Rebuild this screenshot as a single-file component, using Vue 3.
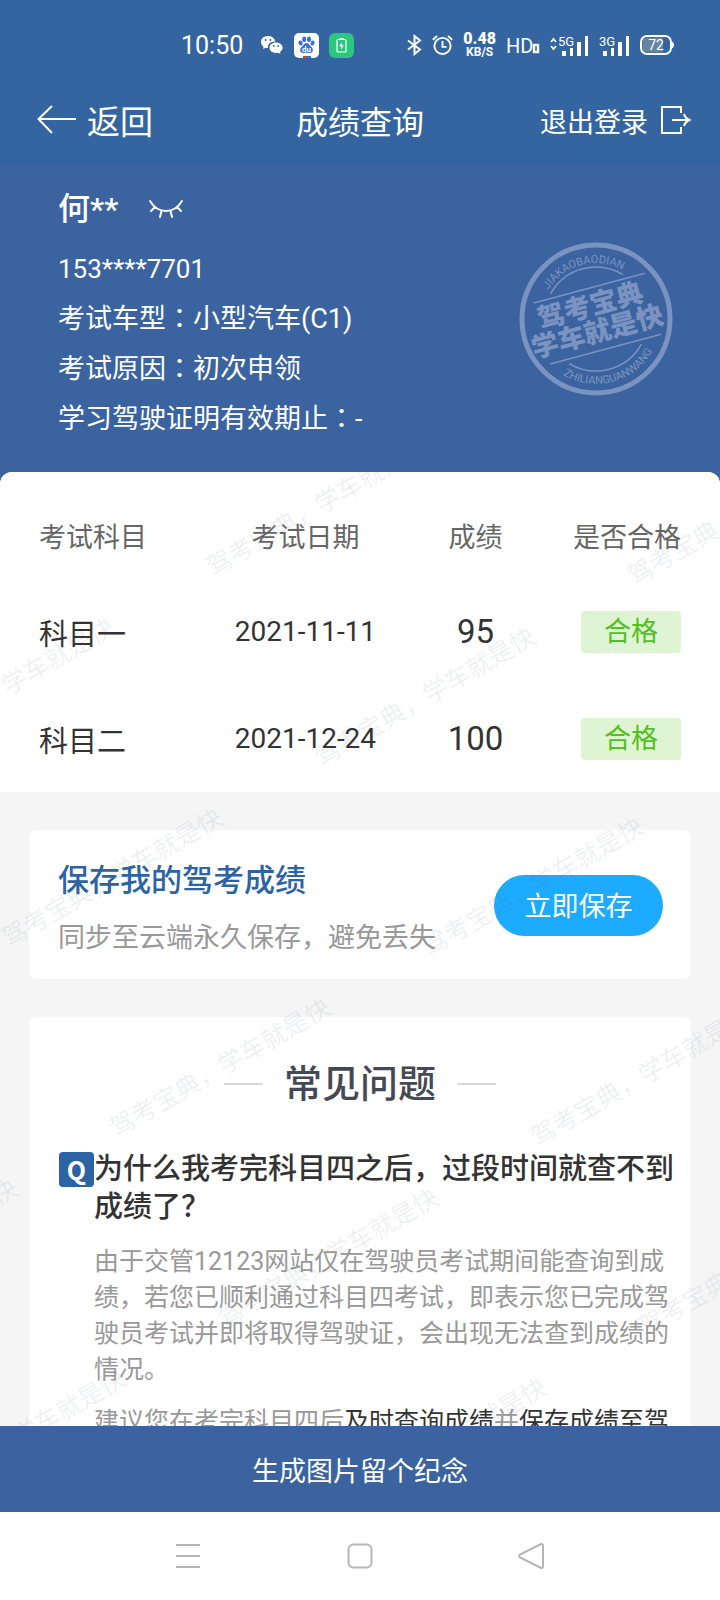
<script setup>
import { ref } from 'vue'

const candidate = {
  name: '何**',
  idNumber: '153****7701'
}

const details = [
  { label: '考试车型', value: '小型汽车(C1)' },
  { label: '考试原因', value: '初次申领' },
  { label: '学习驾驶证明有效期止', value: '-' }
]

const scores = ref([
  { subject: '科目一', date: '2021-11-11', score: 95, result: '合格' },
  { subject: '科目二', date: '2021-12-24', score: 100, result: '合格' }
])

// Watermark lattice, first glyph of each repeat
const marks = []
for (let row = 0; row < 6; row++) {
  for (let col = -2; col < 2; col++) {
    const x = 219 + row * 108 + col * 421
    const y = 91 + row * 190 + col * 9
    if (x > -210 && x < 720) marks.push({ x, y })
  }
}
</script>

<template>
  <div class="screen">
    <header class="top">
      <div class="status">
        <div class="status-left">
          <span class="clock">10:50</span>
          <svg class="wechat" width="24" height="20" viewBox="0 0 24 20">
            <path d="M8 1C3.600 1 1 3.800 1 7c0 2 1 3.600 2.500 4.700L3 14l2.600-1.300c.8.2 1.600.3 2.400.3C7.500 9 11 6.200 15.300 6.400 14.500 3 11.600 1 8 1z" fill="#fff" />
            <path d="M16 7.500c-3.800 0-6.500 2.400-6.500 5.300 0 3 2.900 5.200 6.500 5.200.8 0 1.500-.1 2.200-.3l2.300 1.200-.5-2c1.700-1.100 2.600-2.400 2.600-4.100 0-2.900-2.900-5.300-6.600-5.300z" fill="#fff" />
            <g fill="#3465a0">
              <circle cx="5.600" cy="5" r="1" /><circle cx="10.400" cy="5" r="1" />
              <circle cx="13.800" cy="11" r="0.900" /><circle cx="18.200" cy="11" r="0.900" />
            </g>
          </svg>
          <svg class="app-icon" width="25" height="25" viewBox="0 0 25 25">
            <rect width="25" height="25" rx="5" fill="#fff" />
            <g fill="#3b6fd6">
              <ellipse cx="6.500" cy="10" rx="2" ry="2.600" transform="rotate(-15 6.500 10)" />
              <ellipse cx="10.200" cy="6.200" rx="2" ry="2.800" />
              <ellipse cx="15" cy="6.200" rx="2" ry="2.800" />
              <ellipse cx="18.600" cy="10" rx="2" ry="2.600" transform="rotate(15 18.600 10)" />
              <path d="M12.500 10c-2 0-2.800 1.900-4.200 3.300C6.700 14.800 5.800 16 6.200 17.800c.4 1.900 2 2.400 3.600 2.200 1.800-.3 3.600-.3 5.400 0 1.600.2 3.200-.3 3.600-2.200.4-1.800-.5-3-2.100-4.500C15.300 11.900 14.500 10 12.500 10z" />
            </g>
            <text x="12.500" y="19" text-anchor="middle" font-size="8" font-weight="700" fill="#fff">du</text>
            <rect x="9" y="23" width="4" height="2" fill="#d9363e" />
            <rect x="13" y="23" width="4" height="2" fill="#3b6fd6" />
          </svg>
          <svg class="app-icon" width="25" height="25" viewBox="0 0 25 25">
            <rect width="25" height="25" rx="6" fill="#2bc77f" />
            <rect x="8" y="6.500" width="9" height="12.500" rx="1" fill="none" stroke="#fff" stroke-width="1.200" />
            <rect x="10.500" y="5" width="4" height="1.500" fill="#fff" />
            <path d="M13 9.500l-3 3.800h2v3l3-3.900h-2z" fill="#fff" />
          </svg>
        </div>
        <div class="status-right">
          <svg width="15" height="22" viewBox="0 0 15 22" fill="none" stroke="#fff" stroke-width="2">
            <path d="M1 6.500l12 9-5.500 4.500V2l5.500 4.500-12 9" />
          </svg>
          <svg width="21" height="22" viewBox="0 0 22 22" fill="none" stroke="#fff" stroke-width="2" stroke-linecap="round">
            <circle cx="11" cy="12" r="8.500" />
            <path d="M11 7.500V13h3.500M1.500 5l3.200-3M20.500 5l-3.200-3" />
          </svg>
          <span class="speed"><b>0.48</b><small>KB/S</small></span>
          <svg width="34" height="22" viewBox="0 0 34 22">
            <text x="0" y="19" font-size="20" fill="#fff">HD</text>
            <rect x="28" y="11" width="4" height="7" fill="none" stroke="#fff" stroke-width="2.400" />
          </svg>
          <svg width="39" height="22" viewBox="0 0 39 22" fill="#fff">
            <path d="M1 8l2.500-3L6 8M1 12l2.500 3L6 12" fill="none" stroke="#fff" stroke-width="1.800" />
            <text x="8" y="12" font-size="13">5G</text>
            <path d="M12 17h4v5h-4zM20 14h3v8h-3zM27 8h4v14h-4zM35 2h3v20h-3z" />
          </svg>
          <svg width="31" height="22" viewBox="0 0 31 22" fill="#fff">
            <text x="0" y="12" font-size="13">3G</text>
            <path d="M4 17h4v5H4zM12 14h3v8h-3zM19 8h4v14h-4zM27 2h3v20h-3z" />
          </svg>
          <svg width="34" height="20" viewBox="0 0 34 20">
            <rect x="1" y="1" width="30" height="18" rx="6" fill="#3465a0" stroke="#fff" stroke-width="2" />
            <path d="M7 2.500h16v15H7A4.500 4.500 0 0 1 2.500 13V7A4.500 4.500 0 0 1 7 2.500z" fill="#64859f" />
            <path d="M32 6.500q2 .5 2 3.500t-2 3.500z" fill="#fff" />
            <text x="16" y="15" text-anchor="middle" font-size="14" fill="#fff">72</text>
          </svg>
        </div>
      </div>
      <nav class="nav">
        <button class="nav-button back" type="button">
          <svg width="40" height="30" viewBox="0 0 40 30" fill="none" stroke="#fff" stroke-width="2">
            <path d="M15 1L1.500 14 15 28M1.500 14H39" />
          </svg>
          <span>返回</span>
        </button>
        <h1 class="nav-title">成绩查询</h1>
        <button class="nav-button logout" type="button">
          <span>退出登录</span>
          <svg width="31" height="32" viewBox="0 0 31 32" fill="none" stroke="#fff" stroke-width="2">
            <path d="M21 9V3H2v26h19v-6M12 16h17M24 10q1 4 5.500 6-4.500 2-5.500 6" />
          </svg>
        </button>
      </nav>
    </header>

    <main class="content">
      <section class="profile">
        <div class="profile-info">
          <div class="name">
            <span>{{ candidate.name }}</span>
            <button class="eye" type="button" aria-label="显示">
              <svg width="36" height="22" viewBox="0 0 36 22" fill="none" stroke="#fff" stroke-width="2" stroke-linecap="round">
                <path d="M2 3q6 10 16 10T34 3M7 9l-4 4M13.500 13L12 19M22.500 13l1.500 6M29 9l4 4" />
              </svg>
            </button>
          </div>
          <p class="id-number">{{ candidate.idNumber }}</p>
          <p v-for="item in details" :key="item.label">
            {{ item.label }}<span class="colon">：</span>{{ item.value }}
          </p>
        </div>
        <svg class="stamp" width="156" height="156" viewBox="-78 -78 156 156">
          <defs>
            <path id="arcTop" d="M-56 0A56 56 0 0 1 56 0" />
            <path id="arcBottom" d="M-65 0A65 65 0 0 0 65 0" />
          </defs>
          <circle r="74" fill="none" stroke="#7b93c0" stroke-width="5" />
          <g transform="rotate(-15)" fill="#7b93c0">
            <text font-size="11" text-anchor="middle"><textPath href="#arcTop" startOffset="50%">JIAKAOBAODIAN</textPath></text>
            <text font-size="11" text-anchor="middle"><textPath href="#arcBottom" startOffset="50%">ZHILIANGUANWANG</textPath></text>
            <g fill="none" stroke="#7b93c0" stroke-width="1.500">
              <path d="M-37.400-36.100A52 52 0 0 1 37.400-36.100M-37.400 36.100A52 52 0 0 0 37.400 36.100" />
              <path d="M-56-31.500H59M-56 31.500H59" />
            </g>
            <g class="stamp-title" text-anchor="middle">
              <text x="-2" y="-5">驾考宝典</text>
              <text x="-2" y="22">学车就是快</text>
            </g>
          </g>
        </svg>
      </section>

      <div class="sheet-area">
        <section class="sheet">
          <table class="scores">
            <thead>
              <tr>
                <th class="col-subject">考试科目</th>
                <th class="col-date">考试日期</th>
                <th class="col-score">成绩</th>
                <th class="col-result">是否合格</th>
              </tr>
            </thead>
            <tbody>
              <tr v-for="row in scores" :key="row.subject">
                <td class="col-subject">{{ row.subject }}</td>
                <td class="date">{{ row.date }}</td>
                <td class="score">{{ row.score }}</td>
                <td class="col-result"><span class="tag">{{ row.result }}</span></td>
              </tr>
            </tbody>
          </table>
        </section>

        <section class="card save">
          <div>
            <h2>保存我的驾考成绩</h2>
            <p>同步至云端永久保存，避免丢失</p>
          </div>
          <button class="save-button" type="button">立即保存</button>
        </section>

        <section class="card faq">
          <h2 class="faq-title">常见问题</h2>
          <div class="faq-item">
            <span class="q">Q</span>
            <div class="faq-text">
              <h3>为什么我考完科目四之后，过段时间就查不到成绩了？</h3>
              <p>由于交管12123网站仅在驾驶员考试期间能查询到成绩，若您已顺利通过科目四考试，即表示您已完成驾驶员考试并即将取得驾驶证，会出现无法查到成绩的情况。</p>
              <p>建议您在考完科目四后<em>及时查询成绩</em>并<em>保存成绩至驾</em></p>
            </div>
          </div>
        </section>

        <svg class="watermark" aria-hidden="true">
          <text
            v-for="(m, i) in marks"
            :key="i"
            :transform="`translate(${m.x} ${m.y}) rotate(-30)`"
            x="-12"
            y="9"
          >驾考宝典，学车就是快</text>
        </svg>
      </div>
    </main>

    <button class="generate" type="button">生成图片留个纪念</button>

    <footer class="system-nav">
      <button type="button" aria-label="菜单">
        <svg width="28" height="28" viewBox="0 0 28 28"><path d="M2 3h24M2 14h24M2 25h24" /></svg>
      </button>
      <button type="button" aria-label="主页">
        <svg width="28" height="28" viewBox="0 0 28 28"><rect x="2.500" y="2.500" width="23" height="23" rx="5" /></svg>
      </button>
      <button type="button" aria-label="后退">
        <svg width="28" height="28" viewBox="0 0 28 28"><path d="M23 2L2 12.500q-2 1.500 0 3L23 26q2 .5 2-2V4q0-2.500-2-2z" /></svg>
      </button>
    </footer>
  </div>
</template>

<style>
body {
  margin: 0;
}
</style>

<style scoped>
.screen {
  display: flex;
  flex-direction: column;
  height: 100vh;
  overflow: hidden;
  background: #fff;
  color: #333;
  font-family: Roboto, "Noto Sans CJK SC", sans-serif;
  font-size: 27px;
}

h1, h2, h3, p {
  margin: 0;
  font-weight: 400;
}

button {
  padding: 0;
  border: 0;
  background: none;
  color: inherit;
  font: inherit;
  cursor: pointer;
}

svg {
  display: block;
}

.top {
  flex: none;
  background: #3465a0;
  color: #fff;
}

.status {
  display: flex;
  justify-content: space-between;
  align-items: center;
  height: 70px;
  padding: 10px 46px 0 181px;
}

.status-left,
.status-right {
  display: flex;
  align-items: center;
  gap: 10px;
}

.clock {
  margin-right: 7px;
  font-size: 25px;
}

.speed {
  display: flex;
  flex-direction: column;
  align-items: center;
  line-height: 12px;
  font-weight: 700;
}

.speed b {
  font-size: 16px;
  line-height: 14px;
}

.speed small {
  font-size: 12px;
}

.nav {
  display: grid;
  grid-template-columns: 1fr auto 1fr;
  align-items: center;
  height: 80px;
  padding: 0 29px 6px;
}

.nav-button {
  display: flex;
  align-items: center;
  gap: 10px;
}

.back {
  padding-left: 8px;
  font-size: 33px;
}

.nav-title {
  font-size: 32px;
}

.logout {
  justify-content: flex-end;
  gap: 12px;
}

.content {
  flex: 1;
  min-height: 0;
  overflow: hidden;
}

.profile {
  display: flex;
  justify-content: space-between;
  align-items: center;
  padding: 18px 46px 40px 58px;
  background: #3b63a0;
  color: #fff;
}

.profile p {
  line-height: 50px;
}

.profile .id-number {
  font-size: 26px;
}

.name {
  display: flex;
  align-items: center;
  gap: 30px;
  margin-bottom: 10px;
  font-size: 32px;
  font-weight: 500;
  line-height: 50px;
}

.colon {
  font-family: "Noto Sans CJK TC", sans-serif;
  line-height: 1;
}

.stamp {
  margin-top: 10px;
}

.stamp-title {
  font-size: 27px;
  font-weight: 900;
}

.sheet-area {
  position: relative;
  margin-top: -12px;
  overflow: hidden;
  border-radius: 12px 12px 0 0;
  background: #f5f5f5;
}

.sheet {
  padding: 20px 39px 0;
  background: #fff;
}

.scores {
  width: 100%;
  table-layout: fixed;
  border-collapse: collapse;
  text-align: center;
}

.scores th,
.scores td {
  padding: 0;
}

.scores th {
  height: 86px;
  color: #666;
  font-weight: 400;
}

.scores td {
  height: 107px;
  font-size: 29px;
}

.scores .col-subject {
  width: 26%;
  text-align: left;
}

.col-date {
  width: 31%;
}

.col-score {
  width: 22%;
}

.scores .col-result {
  width: 21%;
  text-align: right;
}

.scores .date {
  font-size: 28px;
}

.scores .score {
  font-size: 33px;
}

.tag {
  display: inline-block;
  width: 100px;
  border-radius: 4px;
  background: #dff4d2;
  color: #52c022;
  font-size: 27px;
  line-height: 42px;
  text-align: center;
  vertical-align: middle;
}

.card {
  margin: 38px 29px 0;
  border-radius: 8px;
  background: #fff;
}

.save {
  display: flex;
  justify-content: space-between;
  align-items: center;
  padding: 18px 28px 17px 29px;
}

.save h2 {
  color: #2c63a3;
  font-size: 31px;
  font-weight: 500;
  line-height: 66px;
}

.save p {
  color: #999;
  line-height: 48px;
}

.save-button {
  width: 169px;
  padding-top: 4px;
  border-radius: 31px;
  background: #1dabff;
  color: #fff;
  line-height: 57px;
}

.faq {
  padding: 39px 16px 60px 30px;
}

.faq-title {
  display: flex;
  justify-content: center;
  align-items: center;
  gap: 22px;
  margin: 0 0 28px -14px;
  color: #454954;
  font-size: 38px;
  font-weight: 500;
  line-height: 56px;
}

.faq-title::before,
.faq-title::after {
  content: "";
  width: 38px;
  height: 2px;
  background: #d5d6dc;
}

.faq-item {
  display: flex;
  align-items: flex-start;
}

.q {
  flex: none;
  width: 35px;
  margin-top: 12px;
  border-radius: 4px;
  background: #2c63a3;
  color: #fff;
  font-family: "Noto Sans CJK SC", sans-serif;
  font-size: 25px;
  font-weight: 700;
  line-height: 35px;
  text-align: center;
}

.faq-text {
  padding-top: 10px;
}

.faq-text h3 {
  margin-bottom: 18px;
  font-size: 29px;
  font-weight: 500;
  line-height: 38px;
}

.faq-text p {
  margin-bottom: 16px;
  color: #999;
  font-size: 25px;
  line-height: 36px;
}

.faq-text em {
  color: #333;
  font-style: normal;
}

.watermark {
  position: absolute;
  inset: 0;
  width: 100%;
  height: 100%;
  pointer-events: none;
  fill: rgba(70, 90, 110, 0.09);
  font-size: 25px;
}

.generate {
  flex: none;
  height: 86px;
  background: #3b63a0;
  color: #fff;
}

.system-nav {
  display: flex;
  flex: none;
  justify-content: center;
  align-items: center;
  gap: 144px;
  height: 88px;
}

.system-nav svg {
  fill: none;
  stroke: #b5b5b5;
  stroke-width: 2;
}
</style>
